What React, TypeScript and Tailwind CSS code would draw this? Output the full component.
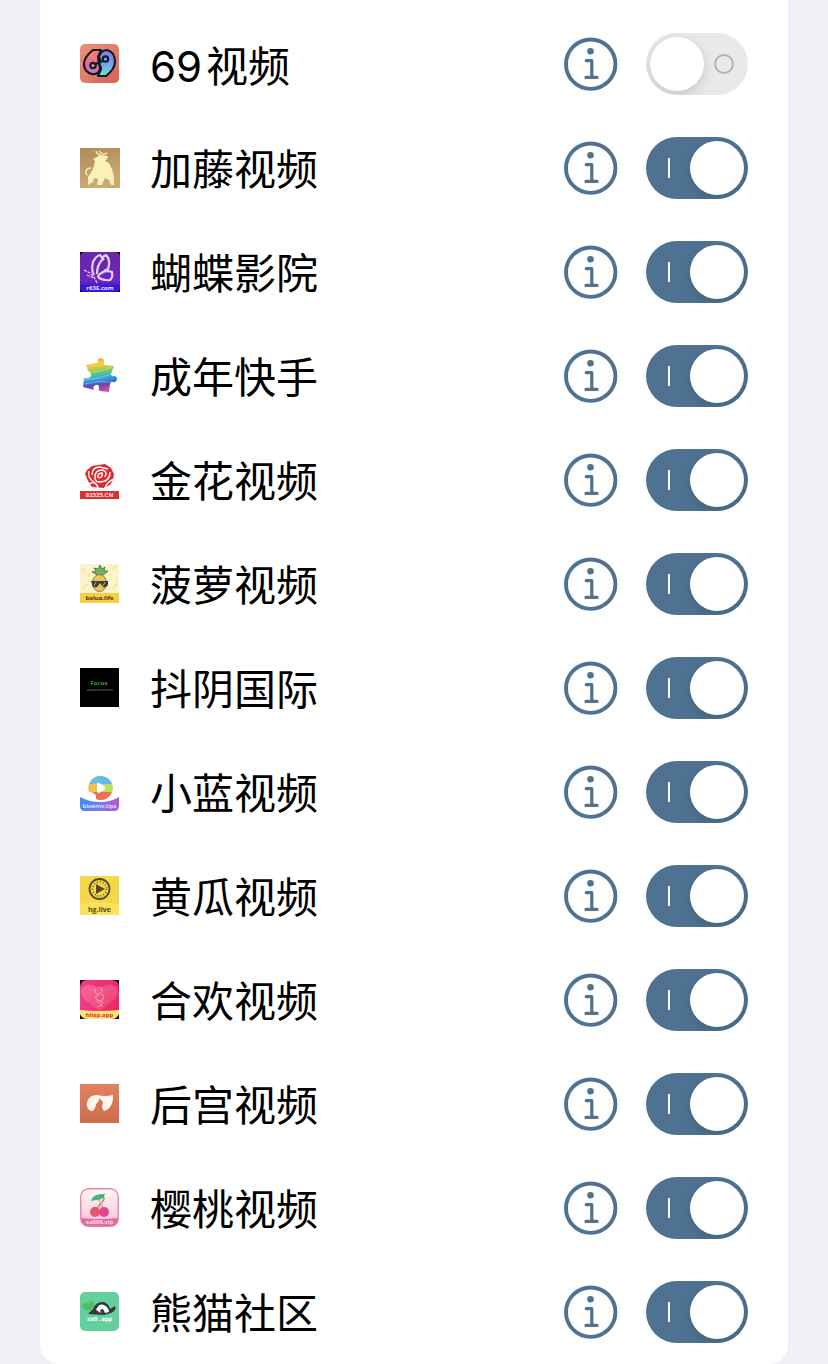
import { useState, type ReactNode } from "react";

interface Channel {
  id: string;
  name: string;
  prefix?: string;
  enabled: boolean;
  logo: ReactNode;
}

const CAPTION = "Open Sans, Noto Sans, sans-serif";

function Logo({ children }: { children: ReactNode }) {
  return (
    <svg viewBox="0 0 40 40" className="size-10 shrink-0" aria-hidden="true">
      {children}
    </svg>
  );
}

function SixNineLogo() {
  return (
    <Logo>
      <defs>
        <linearGradient id="sn-bg" x1="0" y1="0" x2="1" y2="1">
          <stop offset="0" stopColor="#e8917b" />
          <stop offset="1" stopColor="#dc6a5b" />
        </linearGradient>
        <linearGradient id="sn-pink" x1="0" y1="0" x2="0" y2="1">
          <stop offset="0" stopColor="#f48465" />
          <stop offset="0.6" stopColor="#e76c9b" />
          <stop offset="1" stopColor="#b184d8" />
        </linearGradient>
        <linearGradient id="sn-blue" x1="0" y1="0" x2="0" y2="1">
          <stop offset="0" stopColor="#7b7fe0" />
          <stop offset="0.5" stopColor="#72a0ea" />
          <stop offset="1" stopColor="#6ee0d2" />
        </linearGradient>
      </defs>
      <rect width="39" height="39" rx="5" fill="url(#sn-bg)" />
      <path d="M12 37 L26 31 L39 24 V34 Q39 39 34 39 H12Z" fill="#d85f50" opacity="0.4" />
      <g stroke="#171923" strokeWidth="2.2" strokeLinejoin="round">
        <path d="M13 6 H21 L18 13 Q18 15 20 18 Q21 21 20 25 Q18 31 12 30 Q4 28 4 20 Q4 13 13 6Z" fill="url(#sn-pink)" />
        <path d="M26 32 H18 L21 25 Q21 23 19 20 Q18 17 19 13 Q21 6 27 6 Q35 8 35 18 Q35 25 26 32Z" fill="url(#sn-blue)" />
        <path d="M20 14 Q19 19 20 24" fill="none" />
        <circle cx="13" cy="21.5" r="2.7" fill="#e58e9c" />
        <circle cx="25.5" cy="15" r="2.7" fill="#9a9be0" />
        <path d="M15.5 20 L20 18 L23 17" fill="none" />
      </g>
    </Logo>
  );
}

function BullLogo() {
  return (
    <Logo>
      <defs>
        <linearGradient id="bull-bg" x1="0" y1="0" x2="0.3" y2="1">
          <stop offset="0" stopColor="#b08a5c" />
          <stop offset="1" stopColor="#ccab73" />
        </linearGradient>
      </defs>
      <rect width="40" height="40" fill="url(#bull-bg)" />
      <path
        d="M13 11 L17 9 L20 7 L28 8 L27 11 L25 13 L29 15 L32 21 L34 29 L34 37 L31 37 L29 32 L25 30 L23 34 L22 37 L17 37 L18 31 L14 30 L13 34 L8 37 L8 29 L12 23 L14 18 L15 13Z"
        fill="#fbf1b7"
      />
      <path d="M16 3 Q17 7 23 8 M19 3 Q23 8 27 5 M11 20 Q5 20 6 26 L8 27" fill="none" stroke="#fbf1b7" strokeWidth="1.3" />
    </Logo>
  );
}

function ButterflyLogo() {
  return (
    <Logo>
      <defs>
        <linearGradient id="bf-bg" x1="0" y1="0" x2="0" y2="1">
          <stop offset="0" stopColor="#6c26a8" />
          <stop offset="0.7" stopColor="#6b26be" />
          <stop offset="1" stopColor="#3312cf" />
        </linearGradient>
      </defs>
      <rect width="40" height="40" fill="#0b0810" />
      <rect width="40" height="40" rx="5" fill="url(#bf-bg)" />
      <path d="M0 33 H40 V35 Q40 40 35 40 H5 Q0 40 0 35Z" fill="#3b14dd" />
      <g fill="none" stroke="#e5d2f7" strokeWidth="2.2" strokeLinejoin="round">
        <path d="M14 23 Q11 18 13 10 Q16 4 20 3 L24 8" />
        <path d="M17 22 Q17 13 22 8 Q23 4 26 3 Q31 8 28 17 L24 19" />
        <path d="M18 24 Q24 17 32 20 Q33 26 30 28 Q24 29 19 26Z" />
      </g>
      <path d="M4 18 L10 21 L14 25 L17 31 M7 23 L14 26" fill="none" stroke="#e5d2f7" strokeWidth="1.2" strokeDasharray="3 1" />
      <text x="20" y="38" textAnchor="middle" fontFamily={CAPTION} fontSize="6" fontWeight="700" fill="#eee8ff">r63E.com</text>
    </Logo>
  );
}

function PuzzleLogo() {
  return (
    <Logo>
      <defs>
        <linearGradient id="pz" x1="0.3" y1="0" x2="0.45" y2="1">
          <stop offset="0" stopColor="#f3a833" />
          <stop offset="0.22" stopColor="#f7ce43" />
          <stop offset="0.4" stopColor="#86cc54" />
          <stop offset="0.6" stopColor="#28aee0" />
          <stop offset="0.8" stopColor="#594bbd" />
          <stop offset="1" stopColor="#e9449d" />
        </linearGradient>
      </defs>
      <path
        d="M6 9 L16 7 Q19 7 18 5 Q17 2 21 2 Q25 3 24 6 Q23 9 26 9 L34 10 L31 18 Q32 21 34 20 Q37 20 37 23 Q36 27 33 26 Q31 25 30 28 L29 36 L20 35 Q18 34 19 32 Q19 28 16 29 Q12 30 14 34 L3 31 L4 22 Q11 23 11 19 Q11 16 8 15Z"
        fill="url(#pz)"
      />
      <path d="M8 16 Q22 16 32 11 M5 24 Q20 23 32 18 M5 28 Q18 24 31 26" fill="none" stroke="#ffffff66" strokeWidth="0.8" />
    </Logo>
  );
}

function RoseLogo() {
  return (
    <Logo>
      <path d="M7 10 L12 6 L18 5 L25 4 L31 8 L34 14 L33 20 L30 25 L24 28 L12 27 L8 21 L5 14Z" fill="#d92d31" />
      <path
        d="M9 11 Q7 18 14 22 M12 15 Q12 7 20 7 L28 9 M15 17 Q15 10 22 10 Q28 11 25 17 M18 18 Q17 13 22 13 Q23 17 19 18 M30 12 Q30 22 19 22 Q15 22 15 17 M9 24 Q16 20 18 28 M34 19 Q27 22 25 28"
        fill="none" stroke="#fff" strokeWidth="1.4"
      />
      <rect y="31" width="39" height="8" fill="#dc3035" />
      <text x="19.5" y="37" textAnchor="middle" fontFamily={CAPTION} fontSize="6" fontWeight="700" fill="#ffe7e7">82325.CN</text>
    </Logo>
  );
}

function PineappleLogo() {
  return (
    <Logo>
      <rect width="39" height="39" fill="#fcf3cb" />
      <path d="M2 4 L5 7 M32 5 L36 2 M3 24 L7 20 M33 24 L37 20 M7 13 L10 10" stroke="#f5e49c" strokeWidth="2" />
      <path d="M19 12 L12 8 L16 7 L14 4 L18 5 L20 1 L22 5 L25 3 L24 7 L28 7 L22 12Z" fill="#62b967" stroke="#51634c" strokeWidth="0.8" />
      <ellipse cx="19.5" cy="19" rx="7" ry="8.5" fill="#efc556" stroke="#8f7544" strokeWidth="1" />
      <path d="M11 17 H28 V20 Q27 24 23 23 L20 19 L17 23 Q12 24 12 20Z" fill="#3d3b38" />
      <path d="M14 22 L16 18 M23 22 L25 18" stroke="#b8b4a7" />
      <rect y="29" width="39" height="10" fill="#f7cd42" />
      <text x="19.5" y="36" textAnchor="middle" fontFamily={CAPTION} fontSize="6" fontWeight="700" fill="#443716">boluo.life</text>
    </Logo>
  );
}

function FocusLogo() {
  return (
    <Logo>
      <rect width="39" height="39" fill="#000" />
      <text x="19" y="17" textAnchor="middle" fontFamily={CAPTION} fontSize="6" fontWeight="700" fill="#35a52e">Focus</text>
      <path d="M7 22 H33" stroke="#777" strokeWidth="1.2" strokeDasharray="2 0.4 1 0.3" />
    </Logo>
  );
}

function BlueLogo() {
  return (
    <Logo>
      <defs>
        <clipPath id="bl-ball">
          <path d="M19.5 4 A12 12 0 1 1 16 27 Q17 20 9 20 A12 12 0 0 1 19.5 4Z" />
        </clipPath>
        <linearGradient id="bl-base" x1="0" y1="0" x2="1" y2="0">
          <stop offset="0" stopColor="#3d8df0" />
          <stop offset="0.5" stopColor="#747ee8" />
          <stop offset="1" stopColor="#b557d2" />
        </linearGradient>
        <linearGradient id="bl-sky" x1="0" y1="0" x2="1" y2="0">
          <stop offset="0" stopColor="#71cddd" />
          <stop offset="1" stopColor="#59aef0" />
        </linearGradient>
      </defs>
      <g clipPath="url(#bl-ball)">
        <rect width="39" height="30" fill="#f6be4d" />
        <rect width="39" height="12" fill="url(#bl-sky)" />
        <path d="M20 12 H33 V20 H20Z" fill="#b8df62" />
        <path d="M12 20 H33 V30 H12Z" fill="#ee7054" />
      </g>
      <path d="M17 12 Q17 10 19 11 L24 14 Q26 16 24 18 L19 21 Q17 21 17 19Z" fill="#fff" />
      <path d="M0 25 Q9 30 20 30 Q31 30 39 25 V34 Q39 39 34 39 H5 Q0 39 0 34Z" fill="url(#bl-base)" />
      <text x="19.5" y="36" textAnchor="middle" fontFamily={CAPTION} fontSize="6" fontWeight="600" fill="#e8efff">bluemv.tips</text>
    </Logo>
  );
}

function CucumberLogo() {
  return (
    <Logo>
      <rect width="39" height="39" fill="#f5d847" />
      <path d="M0 28 Q19 24 39 28 V39 H0Z" fill="#f9e25a" />
      <circle cx="19.5" cy="13" r="10" fill="none" stroke="#57491a" strokeWidth="1.8" />
      <circle cx="19.5" cy="13" r="7" fill="none" stroke="#57491a" strokeWidth="1.5" strokeDasharray="1 2" />
      <path d="M16 8 L25 13 L16 18Z" fill="#57491a" />
      <text x="19.5" y="36" textAnchor="middle" fontFamily={CAPTION} fontSize="7" fontWeight="700" fill="#5b4c13">hg.live</text>
    </Logo>
  );
}

function HeartLogo() {
  return (
    <Logo>
      <defs>
        <linearGradient id="ht-bg" x1="0" y1="0" x2="1" y2="0">
          <stop offset="0" stopColor="#ed3e8a" />
          <stop offset="1" stopColor="#e92762" />
        </linearGradient>
        <linearGradient id="ht-heart" x1="0" y1="0" x2="1" y2="1">
          <stop offset="0" stopColor="#fb74a3" />
          <stop offset="1" stopColor="#ec3f6c" />
        </linearGradient>
      </defs>
      <rect width="39" height="39" fill="#110a09" />
      <rect width="39" height="39" rx="7" fill="url(#ht-bg)" />
      <path d="M19 31 L5 20 Q-1 14 2 8 Q8 2 19 8 Q31 1 37 8 Q40 14 34 20Z" fill="url(#ht-heart)" opacity="0.8" />
      <path d="M18 7 Q23 7 22 12 L18 15 Q14 17 17 20 L23 22 Q20 28 17 26 M16 9 Q13 13 18 14 M22 14 Q26 19 20 21 M17 21 L23 27" fill="none" stroke="#ffc2d3" strokeWidth="0.7" />
      <path d="M0 30 Q19 32 39 30 V34 Q37 39 31 39 H8 Q2 39 0 34Z" fill="#f9e76c" />
      <text x="19.5" y="37" textAnchor="middle" fontFamily={CAPTION} fontSize="6" fontWeight="700" fill="#d52c61">hhsp.app</text>
    </Logo>
  );
}

function LeafLogo() {
  return (
    <Logo>
      <defs>
        <linearGradient id="lf-bg" x1="0" y1="0" x2="0" y2="1">
          <stop offset="0" stopColor="#e38261" />
          <stop offset="1" stopColor="#ce6d4d" />
        </linearGradient>
      </defs>
      <rect width="39" height="39" fill="url(#lf-bg)" />
      <path d="M11 27 C4 24 6 11 17 11 Q25 13 33 11 Q34 26 20 28Z" fill="#fff7ec" />
      <path d="M11 28 Q16 25 16 20 L19 17 L19 14 L21 16 L23 18 L22 23 L24 28Z" fill="#d57455" />
    </Logo>
  );
}

function CherryLogo() {
  return (
    <Logo>
      <defs>
        <linearGradient id="ch-bg" x1="0" y1="0" x2="0" y2="1">
          <stop offset="0" stopColor="#fff8f7" />
          <stop offset="1" stopColor="#f9bfd6" />
        </linearGradient>
      </defs>
      <rect x="0.7" y="0.7" width="37.6" height="37.6" rx="8" fill="url(#ch-bg)" stroke="#e9899d" strokeWidth="1.4" />
      <path d="M1 30 Q19 32 38 30 Q39 38 30 38 H9 Q1 38 1 30Z" fill="#e568a0" />
      <path d="M11 13 Q13 5 25 6 Q23 13 16 12Z" fill="#46b77c" />
      <path d="M23 8 Q26 11 21 15 L16 22 M20 15 L24 22" fill="none" stroke="#8d7465" strokeWidth="1.1" />
      <path d="M19 12 L22 15 L20 20" stroke="#f5b7b4" strokeWidth="2" fill="none" />
      <circle cx="15" cy="24" r="5" fill="#e85372" />
      <circle cx="24" cy="24" r="5" fill="#e44888" />
      <text x="19.5" y="36" textAnchor="middle" fontFamily={CAPTION} fontSize="6" fontWeight="600" fill="#fff0f6">xa888.vip</text>
    </Logo>
  );
}

function PandaLogo() {
  return (
    <Logo>
      <rect width="39" height="39" rx="5" fill="#63d09b" />
      <path d="M2 14 Q4 9 9 12 Q9 7 14 10 Q15 15 10 18 Q4 20 2 14Z" fill="#55bb68" />
      <path d="M8 22 L13 17 Q16 9 24 10 Q29 12 30 17 L35 14 Q37 18 31 21 L24 23Z" fill="#343a3b" />
      <path d="M16 18 Q19 11 24 13 Q29 16 29 20 L25 21 L23 17 L20 18 L21 21Z" fill="#fafafa" />
      <text x="19.5" y="29" textAnchor="middle" fontFamily="DejaVu Sans Mono, monospace" fontSize="6" fontWeight="700" fill="#fff">xm9.app</text>
    </Logo>
  );
}

const CHANNELS: Channel[] = [
  { id: "sixnine", prefix: "69", name: "视频", enabled: false, logo: <SixNineLogo /> },
  { id: "jiateng", name: "加藤视频", enabled: true, logo: <BullLogo /> },
  { id: "hudie", name: "蝴蝶影院", enabled: true, logo: <ButterflyLogo /> },
  { id: "kuaishou", name: "成年快手", enabled: true, logo: <PuzzleLogo /> },
  { id: "jinhua", name: "金花视频", enabled: true, logo: <RoseLogo /> },
  { id: "boluo", name: "菠萝视频", enabled: true, logo: <PineappleLogo /> },
  { id: "douyin", name: "抖阴国际", enabled: true, logo: <FocusLogo /> },
  { id: "xiaolan", name: "小蓝视频", enabled: true, logo: <BlueLogo /> },
  { id: "huanggua", name: "黄瓜视频", enabled: true, logo: <CucumberLogo /> },
  { id: "hehuan", name: "合欢视频", enabled: true, logo: <HeartLogo /> },
  { id: "hougong", name: "后宫视频", enabled: true, logo: <LeafLogo /> },
  { id: "yingtao", name: "樱桃视频", enabled: true, logo: <CherryLogo /> },
  { id: "xiongmao", name: "熊猫社区", enabled: true, logo: <PandaLogo /> },
];

function InfoIcon() {
  return (
    <svg viewBox="0 0 54 54" className="size-[54px]" fill="none" stroke="#507292" aria-hidden="true">
      <circle cx="26.7" cy="27.2" r="24.7" strokeWidth="3.9" />
      <circle cx="26.5" cy="14.3" r="3.3" fill="#507292" stroke="none" />
      <path d="M22.3 23.7 H27.8 V40.4 M22 40.4 H33" strokeWidth="3.2" strokeLinecap="round" strokeLinejoin="round" />
    </svg>
  );
}

function ChannelRow({ channel }: { channel: Channel }) {
  const [on, setOn] = useState(channel.enabled);

  return (
    <li className="flex h-[104px] items-center px-10">
      {channel.logo}
      <label
        htmlFor={channel.id}
        className="ml-[30px] flex flex-1 items-baseline gap-1 pt-1.5 text-[42px] leading-[60px] text-black"
      >
        {channel.prefix && <span className="font-['Inter',sans-serif]">{channel.prefix}</span>}
        <span>{channel.name}</span>
      </label>
      <button type="button" aria-label="详情" className="mr-7 shrink-0 cursor-pointer">
        <InfoIcon />
      </button>
      {/* before = I / O mark, after = knob */}
      <input
        id={channel.id}
        type="checkbox"
        role="switch"
        checked={on}
        onChange={(e) => setOn(e.target.checked)}
        className="flex h-[62px] w-[102px] shrink-0 cursor-pointer appearance-none flex-row-reverse items-center justify-between overflow-hidden rounded-full bg-[#e9e9e9] pr-[14px] pl-1 before:size-5 before:rounded-full before:border-2 before:border-[#b3b3b3] before:content-[''] after:size-[54px] after:rounded-full after:bg-white after:shadow-[0_4px_12px_rgba(0,0,0,0.15)] after:content-[''] checked:flex-row checked:bg-[#507292] checked:pr-1 checked:pl-[22px] checked:before:w-0.5 checked:before:rounded-none checked:before:border-0 checked:before:bg-white"
      />
    </li>
  );
}

export default function App() {
  return (
    <main className="min-h-screen bg-[#f1f0f6] px-10 font-['Liberation_Sans','Noto_Sans_CJK_SC',sans-serif]">
      <ul className="rounded-b-[20px] bg-white pt-3">
        {CHANNELS.map((channel) => (
          <ChannelRow key={channel.id} channel={channel} />
        ))}
      </ul>
    </main>
  );
}
